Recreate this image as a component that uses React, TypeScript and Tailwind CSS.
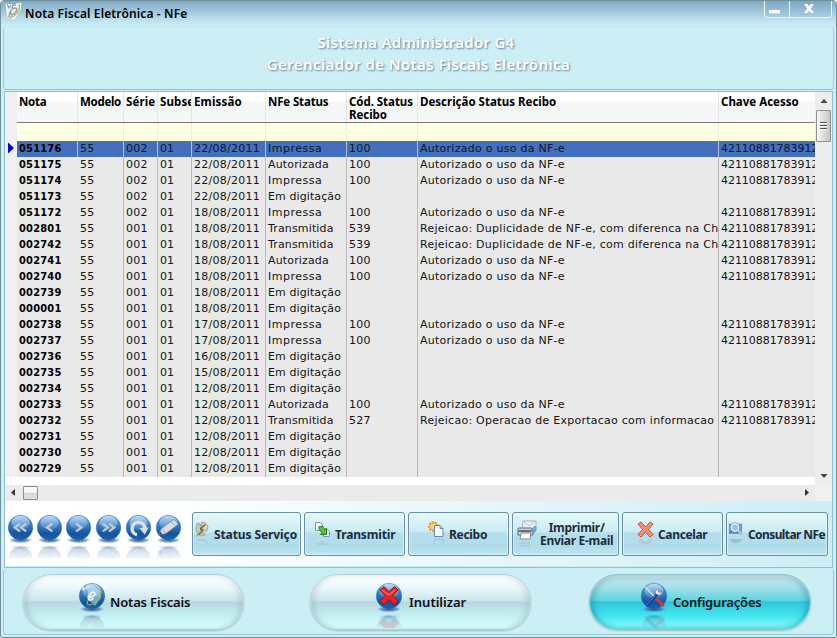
import type { ReactNode } from "react";

type Note = [string, string, string, string, string];

const OK = "Autorizado o uso da NF-e";
const DUP = "Rejeicao: Duplicidade de NF-e, com diferenca na Ch";
const KEY = "42110881783912";

const notes: Note[] = [
  ["051176", "002", "22/08/2011", "Impressa", "100"],
  ["051175", "002", "22/08/2011", "Autorizada", "100"],
  ["051174", "002", "22/08/2011", "Impressa", "100"],
  ["051173", "002", "22/08/2011", "Em digitação", ""],
  ["051172", "002", "18/08/2011", "Impressa", "100"],
  ["002801", "001", "18/08/2011", "Transmitida", "539"],
  ["002742", "001", "18/08/2011", "Transmitida", "539"],
  ["002741", "001", "18/08/2011", "Autorizada", "100"],
  ["002740", "001", "18/08/2011", "Impressa", "100"],
  ["002739", "001", "18/08/2011", "Em digitação", ""],
  ["000001", "001", "18/08/2011", "Em digitação", ""],
  ["002738", "001", "17/08/2011", "Impressa", "100"],
  ["002737", "001", "17/08/2011", "Impressa", "100"],
  ["002736", "001", "16/08/2011", "Em digitação", ""],
  ["002735", "001", "15/08/2011", "Em digitação", ""],
  ["002734", "001", "12/08/2011", "Em digitação", ""],
  ["002733", "001", "12/08/2011", "Autorizada", "100"],
  ["002732", "001", "12/08/2011", "Transmitida", "527"],
  ["002731", "001", "12/08/2011", "Em digitação", ""],
  ["002730", "001", "12/08/2011", "Em digitação", ""],
  ["002729", "001", "12/08/2011", "Em digitação", ""],
];

const messages: Record<string, string> = {
  "": "",
  "100": OK,
  "539": DUP,
  "527": "Rejeicao: Operacao de Exportacao com informacao",
};

const columns = "grid grid-cols-[61px_46px_34px_34px_74px_81px_71px_301px_97px]";

function HeadCell({ children, className = "" }: { children: ReactNode; className?: string }) {
  return (
    <div className={`overflow-hidden border-r border-[#e3e5e8] pl-[2px] pt-[3px] leading-[13px] whitespace-nowrap ${className}`}>
      {children}
    </div>
  );
}

function cellTracking(column: number, value: string) {
  if (column === 0) return "tracking-[0.2px]";
  if (column === 5) {
    return value === "Impressa" ? "tracking-[0.5px]" : value === "Em digitação" ? "tracking-[0.1px]" : "tracking-[0.15px]";
  }
  if (column === 8) return "tracking-[-0.05px]";
  return column === 3 ? "tracking-[-0.1px]" : "tracking-[0.26px]";
}

function Grid() {
  return (
    <div className="flex h-[393px] bg-white">
      <div className="flex h-[385px] w-[12px] shrink-0 flex-col bg-[#f0f0f0] pt-[50px]">
        <svg width="12" height="12" viewBox="0 0 12 12">
          <path d="M3 0.5v11l6-5.5z" fill="#0202dc" />
        </svg>
      </div>
      <div className="w-[798px] shrink-0 overflow-hidden">
        <div
          className={`${columns} h-[31px] border-b border-[#777] bg-[linear-gradient(#fff_9px,#f6f7f9_10px)] font-['Noto_Sans','DejaVu_Sans',sans-serif] text-[11.5px] font-bold text-black`}
        >
          <HeadCell className="tracking-[-0.3px]">Nota</HeadCell>
          <HeadCell className="tracking-[-0.3px]">Modelo</HeadCell>
          <HeadCell className="tracking-[0.1px]">Série</HeadCell>
          <HeadCell className="tracking-[0.1px]">Subse</HeadCell>
          <HeadCell className="tracking-[0.15px]">Emissão</HeadCell>
          <HeadCell className="tracking-[-0.15px]">NFe Status</HeadCell>
          <HeadCell className="tracking-[-0.05px]">
            Cód. Status
            <br />
            Recibo
          </HeadCell>
          <HeadCell>Descrição Status Recibo</HeadCell>
          <HeadCell className="border-r-0">Chave Acesso</HeadCell>
        </div>
        <div className={`${columns} h-[18px] bg-[#ffffe1]`}>
          {Array.from({ length: 9 }, (_, i) => (
            <div key={i} className="border-r border-[#ecece0] last:border-r-0" />
          ))}
        </div>
        {notes.map(([nota, serie, data, status, cod], i) => (
          <div
            key={nota}
            className={`${columns} h-[16px] font-['DejaVu_Sans',sans-serif] text-[11px] leading-[15px] ${
              i === 0 ? "bg-[#446fbb] text-[#0a1430]" : "bg-[#e9e9e9] text-[#141414]"
            }`}
          >
            {[nota, "55", serie, "01", data, status, cod, messages[cod], cod ? KEY : ""].map((v, c) => (
              <div
                key={c}
                className={`overflow-hidden border-r pl-[2px] whitespace-nowrap last:border-r-0 ${cellTracking(c, v)} ${
                  c === 0 ? "font-['DejaVu_Sans_Condensed','DejaVu_Sans',sans-serif] font-bold text-black" : ""
                } ${c === 0 && i > 0 ? "border-[#e9e9e9]" : i === 0 ? "border-[#b5c0d4]" : "border-[#b9b9b9]"}`}
              >
                {v}
              </div>
            ))}
          </div>
        ))}
      </div>
      <div className="flex flex-1 flex-col items-center bg-[#ededed]">
        <svg width="16" height="18" viewBox="0 0 16 18">
          <path d="M4.500 11L8 7l3.500 4z" fill="#444" />
        </svg>
        <div className="flex h-[32px] w-[15px] items-center justify-center rounded-[1px] border border-[#8f8f8f] bg-[linear-gradient(90deg,#f6f6f6,#ddd_50%,#c6c6c8)]">
          <svg width="7" height="9" viewBox="0 0 7 9">
            <path d="M0 0.500h7M0 3.500h7M0 6.500h7" stroke="#4d4d4d" />
            <path d="M0 1.500h7M0 4.500h7M0 7.500h7" stroke="#fff" />
          </svg>
        </div>
        <div className="flex-1" />
        <svg width="16" height="18" viewBox="0 0 16 18">
          <path d="M4.500 7h7L8 11z" fill="#444" />
        </svg>
      </div>
    </div>
  );
}

function HorizontalScroll() {
  return (
    <div className="flex h-[16px] items-center bg-[#ebebeb]">
      <svg width="18" height="16" viewBox="0 0 18 16">
        <path d="M10 4v7L6 7.500z" fill="#333" />
      </svg>
      <div className="h-[14px] w-[15px] rounded-[1px] border border-[#8f8f8f] bg-[linear-gradient(#f7f7f7_45%,#d6d6d6_50%,#dedede)]" />
      <div className="flex-1" />
      <svg width="16" height="16" viewBox="0 0 16 16">
        <path d="M6 4v7l4-3.500z" fill="#333" />
      </svg>
      <div className="h-full w-[17px] bg-[#f0f0f0]" />
    </div>
  );
}

function Orb({ id, size, children }: { id: string; size: number; children: ReactNode }) {
  return (
    <svg width={size} height={size * 1.72} viewBox="0 0 28 48" className="shrink-0 overflow-visible">
      <defs>
        <linearGradient id={`${id}-body`} x1="0" y1="0" x2="0" y2="1">
          <stop offset="0" stopColor="#6fa5dc" />
          <stop offset="0.45" stopColor="#3277be" />
          <stop offset="0.75" stopColor="#15549c" />
          <stop offset="1" stopColor="#1763b1" />
        </linearGradient>
        <linearGradient id={`${id}-shine`} x1="0" y1="0" x2="0" y2="1">
          <stop offset="0" stopColor="#d5edff" stopOpacity="0.75" />
          <stop offset="1" stopColor="#9dd0f5" stopOpacity="0.15" />
        </linearGradient>
        <linearGradient id={`${id}-mirror`} x1="0" y1="0" x2="0" y2="1">
          <stop offset="0" stopColor="#5f80ae" stopOpacity="0.85" />
          <stop offset="0.5" stopColor="#7594bd" stopOpacity="0.5" />
          <stop offset="1" stopColor="#7594bd" stopOpacity="0.1" />
        </linearGradient>
        <radialGradient id={`${id}-shadow`}>
          <stop offset="0" stopColor="#173c80" stopOpacity="0.9" />
          <stop offset="0.65" stopColor="#3862a0" stopOpacity="0.55" />
          <stop offset="1" stopColor="#6c91c0" stopOpacity="0" />
        </radialGradient>
        <clipPath id={`${id}-clip`}>
          <rect x="0" y="32" width="28" height="14" />
        </clipPath>
      </defs>
      <ellipse cx="14" cy="27" rx="12.500" ry="3.300" fill={`url(#${id}-shadow)`} />
      <circle cx="14" cy="14" r="12.700" fill={`url(#${id}-body)`} stroke="#2866a9" strokeWidth="0.5" />
      <ellipse cx="14" cy="9" rx="9.500" ry="7.300" fill={`url(#${id}-shine)`} />
      {children}
      <g clipPath={`url(#${id}-clip)`} opacity="0.5">
        <path d="M1.500 46A12.500 12.500 0 0 1 26.500 46z" fill={`url(#${id}-mirror)`} />
        <ellipse cx="14" cy="34.500" rx="11.500" ry="2.200" fill={`url(#${id}-shadow)`} opacity="0.5" />
        <g transform="translate(0 60) scale(1 -1)" opacity="0.35">{children}</g>
      </g>
    </svg>
  );
}

const chevron = { fill: "none", stroke: "#c3cad6", strokeWidth: 2.4 };

function NavOrbs() {
  return (
    <div className="flex w-[176px] shrink-0 pt-[13px]">
      <div className="w-[29px]">
        <Orb id="first" size={27}>
          <path d="M13.500 10L8 14l5.500 4M20 10L14.500 14l5.500 4" {...chevron} />
        </Orb>
      </div>
      <div className="w-[29px]">
        <Orb id="prev" size={27}>
          <path d="M17 10L11.500 14l5.500 4" {...chevron} />
        </Orb>
      </div>
      <div className="w-[30px]">
        <Orb id="next" size={27}>
          <path d="M11.500 10l5.500 4-5.500 4" {...chevron} />
        </Orb>
      </div>
      <div className="w-[30px]">
        <Orb id="last" size={27}>
          <path d="M8 10l5.500 4L8 18M14.500 10L20 14l-5.500 4" {...chevron} />
        </Orb>
      </div>
      <div className="w-[30px]">
        <Orb id="reload" size={27}>
          <path d="M12.500 21.500A6.600 6.600 0 1 1 20.600 15" fill="none" stroke="#dedfe2" strokeWidth="3.700" />
          <path d="M15 14.500l9.500-.5-4 7.500z" fill="#dedfe2" />
        </Orb>
      </div>
      <Orb id="edit" size={27}>
        <path d="M4.500 21.500l1.500-6L18.500 6q1-.7 2 .2l3 3.300q.6 1-.3 1.900L11 20.500z" fill="#dcdcde" stroke="#67768c" strokeWidth="0.7" />
        <path d="M7.500 16l4 4M16.500 7.500l4.500 4.700" stroke="#8893a4" strokeWidth="0.8" fill="none" />
        <path d="M4.500 21.500l.8-3.200 2.500 2.500z" fill="#344560" />
      </Orb>
    </div>
  );
}

function ToolButton({ icon, children, className }: { icon: ReactNode; children: ReactNode; className: string }) {
  return (
    <button
      type="button"
      className={`flex h-[44px] shrink-0 items-center rounded-[3px] border border-[#668ea8] bg-[linear-gradient(#e6f8fc,#c9ebf5_45%,#b5deec_48%,#b0dce9_80%,#bde7f1)] font-['Noto_Sans','DejaVu_Sans',sans-serif] text-[12px] leading-[13px] font-bold whitespace-nowrap text-[#1b2b3c] shadow-[inset_0_0_0_1px_rgba(235,250,255,.6)] ${className}`}
    >
      {icon}
      {children}
    </button>
  );
}

function StatusIcon() {
  return (
    <svg width="15" height="26" viewBox="0 0 15 26" className="shrink-0">
      <path d="M2.500 2q-3.500 6 .5 11 4 3 7 1l-3-4-2-7z" fill="#c3c8bb" stroke="#8f9a90" strokeWidth=".8" />
      <path d="M7 1q6 1 6 6-1 4-4 3L6 5z" fill="#d3d6c4" stroke="#a09c6c" strokeWidth=".8" />
      <path d="M11 3L6 7l1 2-5 6" fill="none" stroke="#bfa144" strokeWidth="1.800" />
      <path d="M10 4L5 8l3 1-4 5" fill="none" stroke="#4e534a" />
      <path d="M3 19h7l3 3" fill="none" stroke="#8cabb0" opacity=".6" />
    </svg>
  );
}

function TransferIcon() {
  return (
    <svg width="17" height="26" viewBox="0 0 17 26" className="shrink-0">
      <path d="M1.500 1.500h5l2 2v6h-7zM9.500 8.500h4l2 2v5h-6z" fill="#fcfeff" stroke="#7a91c4" />
      <path d="M5 5.500h3.500l2.500 3 1.500-1.500v6.500H6.500l1.800-1.800L5 8.500z" fill="#53c83c" stroke="#237c20" />
      <path d="M2 23h12M6 21h5" stroke="#86b49c" opacity=".45" />
    </svg>
  );
}

function ReceiptIcon() {
  return (
    <svg width="17" height="26" viewBox="0 0 17 26" className="shrink-0">
      <circle cx="5.500" cy="5.500" r="4.300" fill="#f7ce71" stroke="#e88e1d" strokeWidth="2" strokeDasharray="2 1" />
      <path d="M6.500 4.500h5.500l3 3v8H6.500z" fill="#f8fcff" stroke="#6986bd" />
      <path d="M12 4.500v3h3" fill="#b6cef0" stroke="#6986bd" />
      <path d="M6.500 18v6M15 18v6M7 18h8" stroke="#8ba8be" opacity=".5" />
    </svg>
  );
}

function PrinterIcon() {
  return (
    <svg width="20" height="29" viewBox="0 0 20 29" className="shrink-0">
      <path d="M6 1h13v10H5z" fill="#eef1f4" stroke="#a6afb7" />
      <path d="M6 1l6 5 7-5" fill="none" stroke="#b9c0c6" />
      <path d="M1 9q0-1 1-1h13l1 2v5H1z" fill="#cfd4da" stroke="#606b78" />
      <path d="M4 13h10l-1 6H3z" fill="#fff" stroke="#7f8995" />
      <path d="M1.500 11h13" stroke="#454e59" strokeWidth="1.500" />
      <path d="M18 6l-4 4h2v3q3-1 3-5z" fill="#70afe8" stroke="#3b7abc" strokeWidth=".5" />
      <path d="M2 23h11M3 26h10" stroke="#91afbd" opacity=".5" />
    </svg>
  );
}

function CancelIcon() {
  return (
    <svg width="17" height="26" viewBox="0 0 17 26" className="shrink-0">
      <path d="M1 3l3-2 4.500 5L13 1l3 2-4.500 5.500 4.500 5-3 2.500-4.500-5L4 16l-3-2.500L5.500 8.500z" fill="#f59a84" stroke="#d54330" strokeLinejoin="round" />
      <path d="M3.500 3.500l10 10.500M13.500 3.500L3.500 14" stroke="#f08a74" strokeWidth="2.200" />
      <path d="M1 19q4-2 7.500 2Q12 17 16 19l-4 4H5z" fill="#c98f91" opacity=".3" />
    </svg>
  );
}

function SearchIcon() {
  return (
    <svg width="16" height="24" viewBox="0 0 16 24" className="shrink-0">
      <path d="M0.500 1.500h14v11H0.500z" fill="#5f9fd8" stroke="#ccdfef" />
      <path d="M1 11l4-3 5 4" fill="none" stroke="#3f7ba8" />
      <circle cx="7" cy="5.500" r="3.800" fill="#8fc4f0" stroke="#eef4f9" strokeWidth="1.500" />
      <circle cx="7" cy="5.500" r="4.800" fill="none" stroke="#6580a0" strokeWidth=".6" />
      <path d="M10 8l4 5" stroke="#b8c0c8" strokeWidth="2.500" />
      <path d="M1 17h13l-3 4H5z" fill="#739ba9" opacity=".4" />
    </svg>
  );
}

function Toolbar() {
  return (
    <div className="flex h-[65px] items-start bg-[linear-gradient(90deg,#fff,#fbfeff_23%,#cdeef5)] pl-[2px]">
      <NavOrbs />
      <div className="flex gap-[3px] pt-[11px] pl-[9px]">
        <ToolButton icon={<StatusIcon />} className="w-[109px] gap-[4px] pl-[2px] tracking-[-0.1px]">Status Serviço</ToolButton>
        <ToolButton icon={<TransferIcon />} className="w-[101px] gap-[4px] pl-[9px] tracking-[-0.15px]">Transmitir</ToolButton>
        <ToolButton icon={<ReceiptIcon />} className="w-[101px] gap-[4px] pl-[19px] tracking-[-0.3px]">Recibo</ToolButton>
        <ToolButton icon={<PrinterIcon />} className="w-[107px] gap-[3px] pl-[4px]">
          <span className="flex flex-col items-center tracking-[-0.3px]">
            <span>Imprimir/</span>
            <span>Enviar E-mail</span>
          </span>
        </ToolButton>
        <ToolButton icon={<CancelIcon />} className="w-[101px] gap-[4px] pl-[14px] tracking-[-0.35px]">Cancelar</ToolButton>
        <ToolButton icon={<SearchIcon />} className="w-[102px] gap-[4px] pl-[1px] tracking-[-0.6px]">Consultar NFe</ToolButton>
      </div>
    </div>
  );
}

function Pill({ icon, label, className, active = false }: { icon: ReactNode; label: string; className: string; active?: boolean }) {
  return (
    <button
      type="button"
      className={`flex h-[56px] shrink-0 items-start rounded-full border pt-[7px] font-['Noto_Sans','DejaVu_Sans',sans-serif] text-[13px] font-semibold text-[#071015] ${
        active
          ? "border-[#8fc5cf] bg-[linear-gradient(#c5dfe3,#a9e3ea_20%,#5fd5e3_47%,#30c6db_50%,#43e4ef_75%,#90fffa)] shadow-[inset_4px_0_6px_-1px_rgba(0,110,140,.4),inset_-4px_0_6px_-1px_rgba(0,110,140,.4),inset_0_2px_2px_rgba(255,255,255,.7),0_1px_2px_#9dbbc2]"
          : "border-[#b5d3da] bg-[linear-gradient(#fff,#e8f8fa_25%,#c9e5ea_47%,#b8d8df_51%,#c4f3f5_78%,#dcffff)] shadow-[inset_4px_0_6px_-2px_rgba(90,125,140,.28),inset_-4px_0_6px_-2px_rgba(90,125,140,.28),inset_0_2px_2px_#fff,0_1px_2px_#9dbbc2]"
      } ${className}`}
    >
      {icon}
      <span className="mt-[11px] leading-[18px]">{label}</span>
    </button>
  );
}

function BottomBar() {
  return (
    <div className="flex h-[66px] items-start rounded-sm border-x border-b border-[#94c9dc] bg-[#cceef5] pt-[5px] pl-[19px]">
      <Pill
        label="Notas Fiscais"
        className="mr-[66px] w-[221px] gap-[4px] pl-[54px] tracking-[-0.15px]"
        icon={
          <Orb id="notas" size={28}>
            <path d="M9 5l5-2 8 5 1 8-6 8-3-3-5-5 1-6z" fill="#c7e7fb" opacity=".5" />
            <path d="M4 8.500l1.500-3.500v3l2-2.500M8.500 7l.7-2.500h2" fill="none" stroke="#edf7ff" strokeWidth="1" />
            <path d="M11 16l6.500-3.500q-1-4-4.500-1.500-3 3-2.500 6 1.500 2.500 5-1" fill="none" stroke="#f5faff" strokeWidth="1.600" />
            <path d="M19 6q6 2 2.500 9-4 7-10 8-4-.5-1-5" fill="none" stroke="#a7ba4a" strokeWidth="1.100" />
          </Orb>
        }
      />
      <Pill
        label="Inutilizar"
        className="mr-[58px] w-[221px] gap-[6px] pl-[64px]"
        icon={
          <Orb id="inutilizar" size={28}>
            <path d="M5 8l4-3.500 5 5 5.500-5L23 8l-5 5.500 5 5.500-4 4-5-5.500L9 22.500 5 19l5-5.500z" fill="#e72424" stroke="#96111d" strokeLinejoin="round" />
            <path d="M7 8l7 5 6-5" fill="none" stroke="#f4706a" strokeWidth="1.200" />
          </Orb>
        }
      />
      <Pill
        active
        label="Configurações"
        className="w-[222px] gap-[5px] pl-[50px] tracking-[-0.2px]"
        icon={
          <Orb id="config" size={28}>
            <path d="M5 5l12 12" stroke="#e2e5e8" strokeWidth="1.300" />
            <path d="M15.500 16l8.500 8" stroke="#d63a36" strokeWidth="2.800" />
            <path d="M6.500 24L17 12.500" stroke="#173d9d" strokeWidth="3" />
            <path d="M6.500 23L16 12.500" stroke="#5b87ec" strokeWidth="0.9" />
            <path d="M15.500 11.500q-1-4 3.500-4.500l-.8 2.700 2.300.8 1.200-1.800q1 4-3.200 4.300z" fill="#ebece8" stroke="#68737b" strokeWidth=".6" />
          </Orb>
        }
      />
    </div>
  );
}

function TitleBar() {
  return (
    <div className="flex h-[25px] shrink-0 items-start bg-[linear-gradient(#7fa8c4,#9cc2d5_35%,#bbdfeb_75%,#cceef5)] pl-[4px]">
      <svg width="18" height="20" viewBox="0 0 18 20">
        <path d="M1 3l7 1 8-2-1 7-6 9-6-2z" fill="#e8f3f4" stroke="#f8ffff" />
        <path d="M2 3l2 4 2-3M7 7l1-3h3M4 16q1-9 6-9 4 0 0 5-5 4-4-1" fill="none" stroke="#8b9fa7" strokeWidth="1.300" />
        <path d="M14 3q2 6-4 11-3 3-6 2" fill="none" stroke="#b4bc6a" strokeWidth="1.500" />
      </svg>
      <h1 className="ml-[2px] mt-[4px] font-['Noto_Sans','DejaVu_Sans',sans-serif] text-[12px] leading-[17px] font-semibold tracking-[0.13px] text-black">
        Nota Fiscal Eletrônica - NFe
      </h1>
      <div className="mr-[4px] ml-auto flex h-[17px] w-[68px] rounded-b-[4px] border border-t-0 border-[#eaf7fc] bg-[linear-gradient(#7da7c4,#a8cde0)]">
        <button type="button" aria-label="Minimizar" className="flex w-[25px] items-start justify-center border-r border-[#eaf7fc] pt-[9px] pr-[6px]">
          <svg width="11" height="4" viewBox="0 0 11 4">
            <rect width="11" height="3.500" fill="#f9fcfe" />
          </svg>
        </button>
        <button type="button" aria-label="Fechar" className="flex flex-1 justify-center pt-[3px] pr-[4px]">
          <svg width="10" height="9" viewBox="0 0 10 9">
            <path d="M0 0h3.500L5 2.500 6.500 0H10L6.800 4.500 10 9H6.500L5 6.500 3.500 9H0l3.200-4.500z" fill="#fbfdff" />
          </svg>
        </button>
      </div>
    </div>
  );
}

export default function App() {
  return (
    <div className="flex h-[638px] w-[837px] flex-col overflow-hidden rounded-t-[4px] rounded-b-[2px] border border-[#708f9b] bg-[#cceef5]">
      <TitleBar />
      <div className="mx-[2px] flex h-[64px] shrink-0 flex-col items-center rounded-sm border-x border-b border-t border-x-[#9dcfdf] border-t-[#c1e6ef] border-b-[#8fc2d8] pt-[4px] font-['Noto_Sans','DejaVu_Sans',sans-serif] text-[15px] leading-[22px] font-semibold text-white [text-shadow:1px_1px_2px_#5f7f90]">
        <p className="-ml-[5px] tracking-[0.25px]">Sistema Administrador G4</p>
        <p className="tracking-[0.4px]">Gerenciador de Notas Fiscais Eletrônica</p>
      </div>
      <main className="mt-px mr-[3px] ml-[3px] flex h-[477px] shrink-0 flex-col border border-[#8fc0d4]">
        <Grid />
        <HorizontalScroll />
        <Toolbar />
      </main>
      <div className="mx-[2px] mt-px">
        <BottomBar />
      </div>
    </div>
  );
}
